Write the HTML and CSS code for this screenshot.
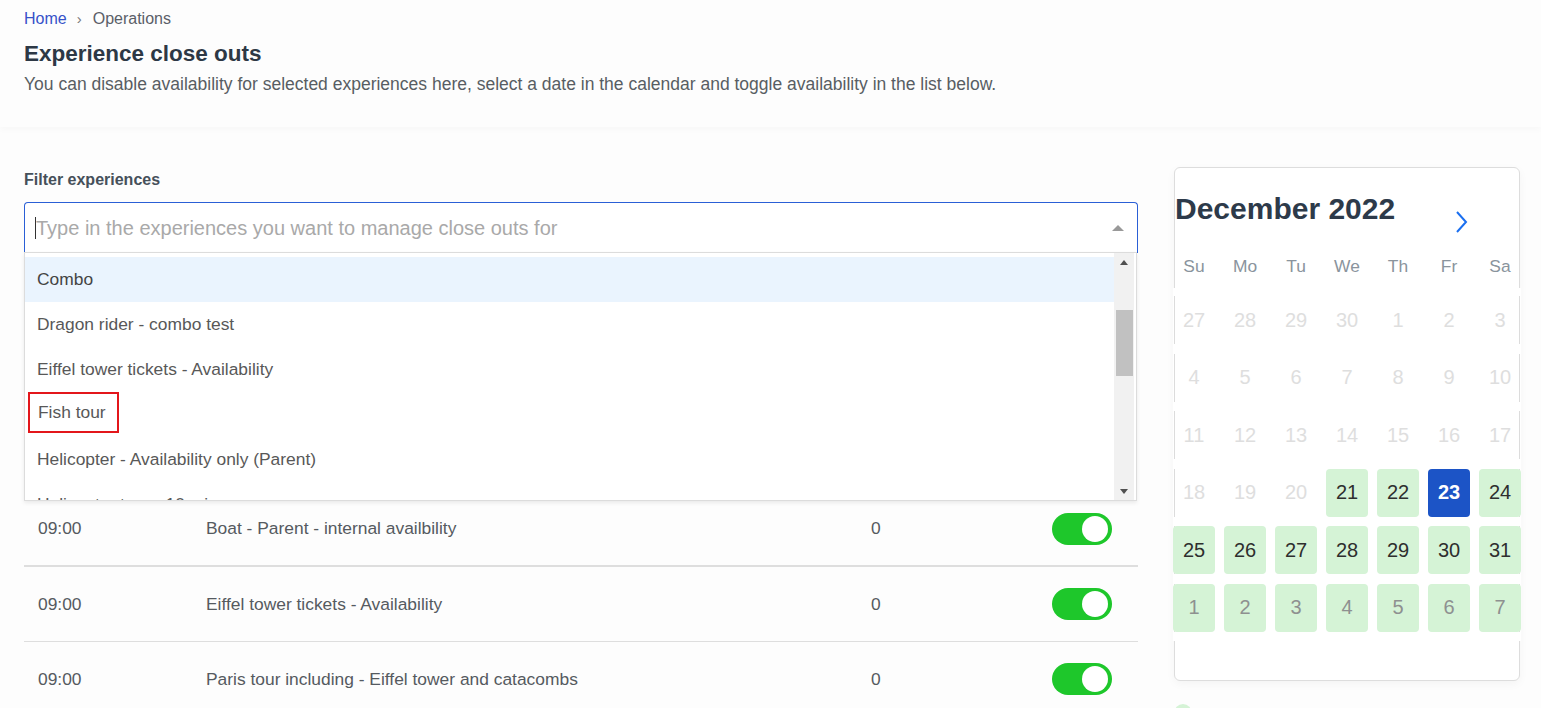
FILE: index.html
```html
<!DOCTYPE html>
<html lang="en">
<head>
<meta charset="utf-8">
<title>Experience close outs</title>
<link rel="stylesheet" href="styles.css">
</head>
<body>
<header class="page-header">
  <nav class="breadcrumb">
    <a class="crumb-link" href="#">Home</a>
    <span class="crumb-sep">›</span>
    <span class="crumb-current">Operations</span>
  </nav>
  <h1 class="page-title">Experience close outs</h1>
  <p class="page-sub">You can disable availability for selected experiences here, select a date in the calendar and toggle availability in the list below.</p>
</header>

<main class="content">
  <section class="left-col">
    <label class="filter-label">Filter experiences</label>
    <div class="select-wrap">
      <div class="select-input">
        <span class="caret"></span>
        <span class="placeholder">Type in the experiences you want to manage close outs for</span>
        <span class="select-arrow"></span>
      </div>
      <div class="dropdown">
        <ul class="options">
          <li class="option active">Combo</li>
          <li class="option">Dragon rider - combo test</li>
          <li class="option">Eiffel tower tickets - Availability</li>
          <li class="option"><span class="mark">Fish tour</span></li>
          <li class="option">Helicopter - Availability only (Parent)</li>
          <li class="option">Helicopter tour - 10 mins</li>
        </ul>
        <div class="scrollbar">
          <span class="sb-btn"><span class="tri-up"></span></span>
          <span class="sb-track"><span class="sb-thumb"></span></span>
          <span class="sb-btn"><span class="tri-down"></span></span>
        </div>
      </div>
    </div>

    <div class="rows">
      <div class="row row-first">
        <span class="c-time">09:00</span>
        <span class="c-name">Boat - Parent - internal availbility</span>
        <span class="c-count">0</span>
        <span class="toggle"><span class="knob"></span></span>
      </div>
      <div class="row">
        <span class="c-time">09:00</span>
        <span class="c-name">Eiffel tower tickets - Availability</span>
        <span class="c-count">0</span>
        <span class="toggle"><span class="knob"></span></span>
      </div>
      <div class="row">
        <span class="c-time">09:00</span>
        <span class="c-name">Paris tour including - Eiffel tower and catacombs</span>
        <span class="c-count">0</span>
        <span class="toggle"><span class="knob"></span></span>
      </div>
    </div>
  </section>

  <aside class="right-col">
    <div class="cal-card">
      <div class="cal-head">
        <div class="cal-title-row">
          <h2 class="cal-title">December 2022</h2>
          <svg class="cal-next" width="14" height="24" viewBox="0 0 14 24"><path d="M3 2 L12 12 L3 22" fill="none" stroke="#1a6ff0" stroke-width="2"/></svg>
        </div>
        <div class="weekdays">
          <span>Su</span><span>Mo</span><span>Tu</span><span>We</span><span>Th</span><span>Fr</span><span>Sa</span>
        </div>
      </div>
      <div class="weeks">
        <div class="week">
          <span class="day off">27</span><span class="day off">28</span><span class="day off">29</span><span class="day off">30</span><span class="day off">1</span><span class="day off">2</span><span class="day off">3</span>
        </div>
        <div class="week">
          <span class="day off">4</span><span class="day off">5</span><span class="day off">6</span><span class="day off">7</span><span class="day off">8</span><span class="day off">9</span><span class="day off">10</span>
        </div>
        <div class="week">
          <span class="day off">11</span><span class="day off">12</span><span class="day off">13</span><span class="day off">14</span><span class="day off">15</span><span class="day off">16</span><span class="day off">17</span>
        </div>
        <div class="week">
          <span class="day off">18</span><span class="day off">19</span><span class="day off">20</span><span class="day avail">21</span><span class="day avail">22</span><span class="day selected">23</span><span class="day avail">24</span>
        </div>
        <div class="week">
          <span class="day avail">25</span><span class="day avail">26</span><span class="day avail">27</span><span class="day avail">28</span><span class="day avail">29</span><span class="day avail">30</span><span class="day avail">31</span>
        </div>
        <div class="week">
          <span class="day avail next">1</span><span class="day avail next">2</span><span class="day avail next">3</span><span class="day avail next">4</span><span class="day avail next">5</span><span class="day avail next">6</span><span class="day avail next">7</span>
        </div>
      </div>
    </div>
    <div class="legend">
      <span class="legend-dot"></span>
      <span class="legend-text">Available</span>
    </div>
  </aside>
</main>
</body>
</html>
```

FILE: styles.css
```css
* { box-sizing: border-box; }
html, body { margin: 0; padding: 0; }
body {
  background: #fdfdfd;
  font-family: "Liberation Sans", Arial, sans-serif;
  color: #555a60;
  overflow: hidden;
}

.page-header {
  height: 127px;
  padding: 9px 24px 0 24px;
  background: #fdfdfd;
  box-shadow: 0 3px 6px rgba(0, 0, 0, 0.025);
  position: relative;
}
.breadcrumb {
  font-size: 16px;
  line-height: 20px;
  display: flex;
  align-items: center;
}
.crumb-link { color: #3652c9; text-decoration: none; }
.crumb-sep { color: #777; margin: 0 11px 0 10px; font-size: 15px; }
.crumb-current { color: #5a6068; }
.page-title {
  margin: 12px 0 0 0;
  font-size: 22.5px;
  line-height: 26px;
  font-weight: 700;
  color: #2d3845;
}
.page-sub {
  margin: 6px 0 0 0;
  font-size: 17.5px;
  line-height: 22px;
  color: #585d63;
}

.content {
  display: flex;
  gap: 36px;
  padding: 40px 21px 0 24px;
}
.left-col { flex: 1; min-width: 0; }
.right-col { width: 346px; flex: none; }

.filter-label {
  display: block;
  font-size: 16px;
  line-height: 24px;
  font-weight: 700;
  color: #46505a;
  margin-bottom: 11px;
  padding-top: 1px;
}
.select-wrap { position: relative; margin-top: -1px; }
.select-input {
  height: 51px;
  border: 1px solid #2a5fd6;
  border-bottom: none;
  border-radius: 4px 4px 0 0;
  background: #fff;
  display: flex;
  align-items: center;
  padding: 0 12px 0 10px;
}
.caret {
  width: 1px;
  height: 22px;
  background: #333;
}
.placeholder {
  flex: 1;
  font-size: 20px;
  color: #a9a9a9;
  line-height: 24px;
  padding-bottom: 1px;
}
.select-arrow {
  width: 0; height: 0;
  border-left: 6px solid transparent;
  border-right: 6px solid transparent;
  border-bottom: 6px solid #999;
  margin-right: 1px;
}

.dropdown {
  position: absolute;
  top: 50px;
  left: 0;
  width: 1113px;
  height: 249px;
  background: #fff;
  border: 1px solid #dcdcdc;
  box-shadow: 0 2px 4px rgba(0, 0, 0, 0.08);
  display: flex;
  z-index: 5;
  overflow: hidden;
}
.options {
  list-style: none;
  margin: 0;
  padding: 4px 0 0 0;
  flex: 1;
}
.option {
  height: 45px;
  line-height: 45px;
  padding-left: 12px;
  font-size: 17.4px;
  color: #585858;
  white-space: nowrap;
}
.option.active { background: #eaf4fe; color: #444; }
.mark {
  display: inline-block;
  border: 2px solid #e3161b;
  line-height: 37px;
  padding: 0 11px 0 8px;
  margin-left: -9px;
  vertical-align: top;
}
.scrollbar {
  width: 20px;
  margin-right: 2px;
  background: #f1f1f1;
  display: flex;
  flex-direction: column;
}
.sb-btn {
  height: 18px;
  display: flex;
  align-items: center;
  justify-content: center;
}
.tri-up {
  width: 0; height: 0;
  border-left: 4px solid transparent;
  border-right: 4px solid transparent;
  border-bottom: 5px solid #505050;
}
.tri-down {
  width: 0; height: 0;
  border-left: 4px solid transparent;
  border-right: 4px solid transparent;
  border-top: 5px solid #505050;
}
.sb-track { flex: 1; padding: 39px 1px 0 2px; }
.sb-thumb { display: block; height: 66px; background: #c1c1c1; }

.rows { margin-top: 239px; }
.row {
  height: 75px;
  display: grid;
  grid-template-columns: 168px 665px 1fr 60px;
  align-items: center;
  padding: 0 26px 0 14px;
  border-bottom: 1px solid #dedede;
  font-size: 17.4px;
  color: #555a60;
}
.row-first { border-bottom: 2px solid #dedede; }
.toggle {
  width: 60px;
  height: 32px;
  border-radius: 16px;
  background: #1ec72b;
  display: flex;
  align-items: center;
  justify-content: flex-end;
  padding-right: 4px;
}
.knob {
  width: 26px;
  height: 26px;
  border-radius: 50%;
  background: #fff;
}

.cal-card {
  height: 514px;
  border: 1px solid #dddddd;
  border-radius: 6px;
  background: #fff;
  box-shadow: 0 3px 10px rgba(0, 0, 0, 0.04);
}
.cal-head { padding: 23px 0 10px 0; }
.cal-title-row { display: flex; align-items: flex-start; }
.cal-title {
  margin: 0;
  font-size: 30px;
  line-height: 36px;
  font-weight: 700;
  color: #2d3a4a;
}
.cal-next { margin: 19px 0 0 59px; }
.weekdays {
  margin: 20px 0 0 -2px;
  width: 348px;
  display: grid;
  grid-template-columns: repeat(7, 42px);
  column-gap: 9px;
  font-size: 17.4px;
  line-height: 24px;
  color: #8a949d;
  text-align: center;
}
.weeks {
  margin-left: -2px;
  width: 348px;
  background: #fff;
  padding: 8px 0 9px 0;
  display: flex;
  flex-direction: column;
  gap: 9.5px;
}
.week {
  display: grid;
  grid-template-columns: repeat(7, 42px);
  column-gap: 9px;
  height: 48px;
  background:
    linear-gradient(#dcdcdc, #dcdcdc) left 1px top 0 / 1px 100% no-repeat,
    linear-gradient(#dcdcdc, #dcdcdc) right 1px top 0 / 1px 100% no-repeat;
}
.day {
  display: flex;
  align-items: center;
  justify-content: center;
  font-size: 20px;
  border-radius: 4px;
}
.day.off { color: #dedede; }
.day.avail { background: #d5f3d6; color: #2e2e2e; }
.day.next { color: #8e9090; }
.day.selected { background: #1c54c6; color: #fff; font-weight: 700; }

.legend {
  margin-top: 23px;
  display: flex;
  align-items: center;
  gap: 10px;
}
.legend-dot {
  width: 18px;
  height: 18px;
  border-radius: 50%;
  background: #d5f3d6;
}
.legend-text { font-size: 15px; color: #555; }
```
